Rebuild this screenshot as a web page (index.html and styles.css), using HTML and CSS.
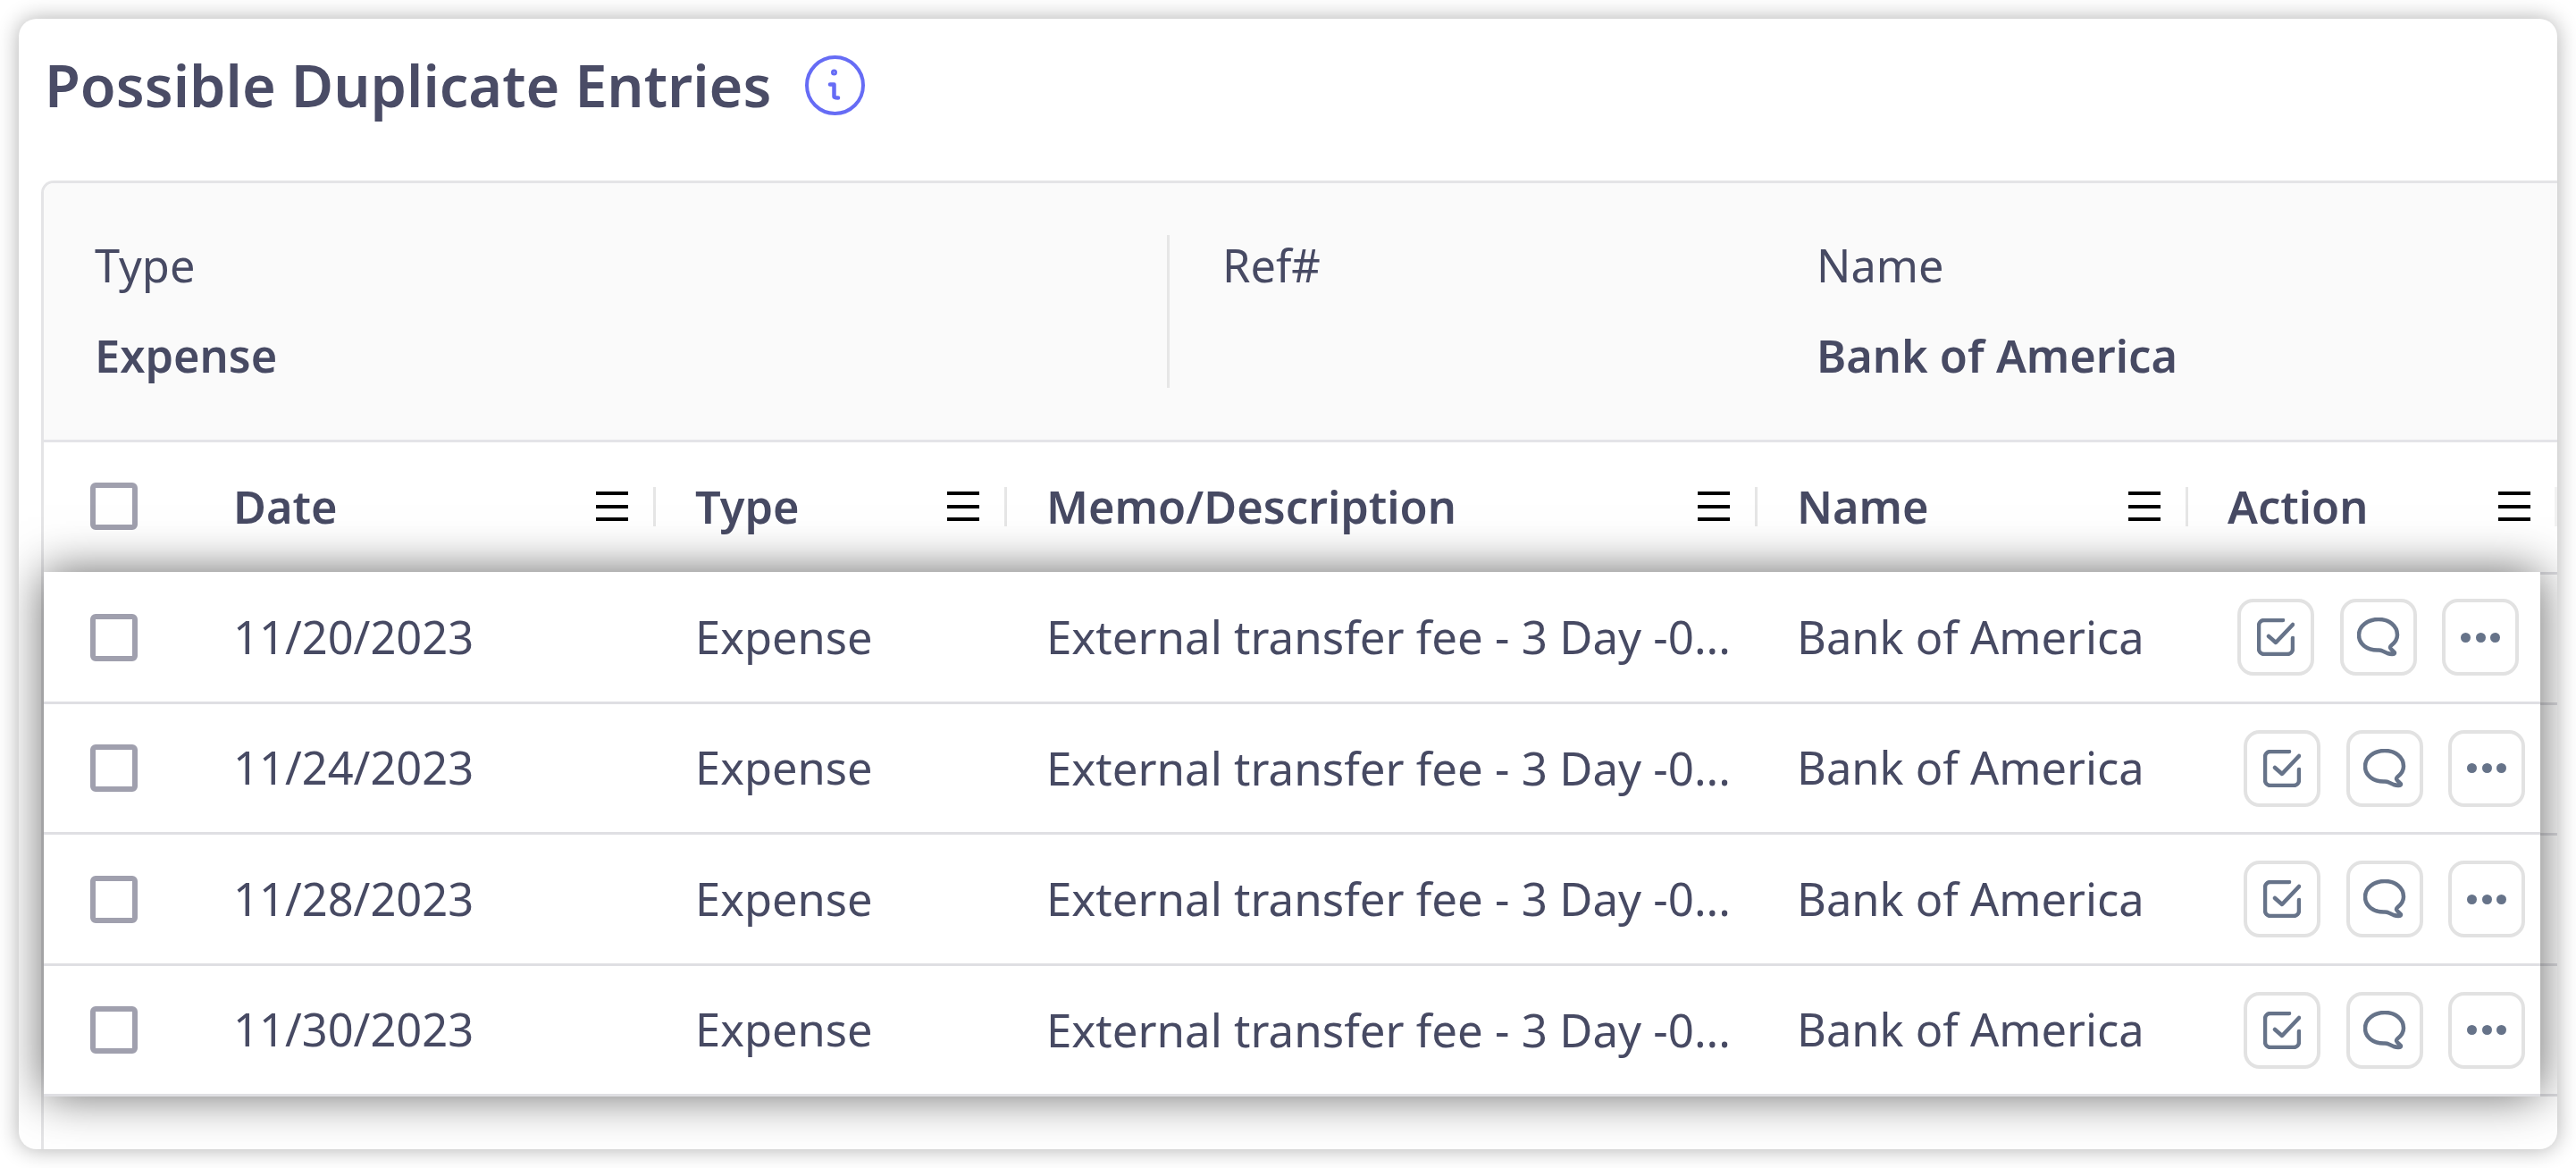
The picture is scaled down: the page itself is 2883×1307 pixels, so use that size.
FILE: index.html
```html
<!DOCTYPE html>
<html lang="en">
<head>
<meta charset="utf-8">
<title>Possible Duplicate Entries</title>
<link rel="stylesheet" href="styles.css">
</head>
<body>
<main class="card">
  <header class="title-row">
    <h1 class="title">Possible Duplicate Entries</h1>
    <svg class="info-icon" viewBox="0 0 67 67" fill="none" stroke="#666cf5" stroke-width="4" stroke-linecap="round" stroke-linejoin="round"><circle cx="33.5" cy="33.5" r="31.5"/><path stroke-width="4.500" d="M28 32.500h4.500v13.500q0 1.500 4.500 1.500"/><circle cx="32.500" cy="19" r="1.500"/></svg>
  </header>
  <section class="box">
    <div class="summary">
      <div class="sum-col sum-type"><div class="sum-label">Type</div><div class="sum-value">Expense</div></div>
      <div class="sum-col sum-ref"><div class="sum-label">Ref#</div></div>
      <div class="sum-col sum-name"><div class="sum-label">Name</div><div class="sum-value">Bank of America</div></div>
    </div>
    <div class="head grid">
      <div class="cell-check"><span class="check"></span></div>
      <div class="hcell"><span class="hlabel">Date</span><span class="menu"></span></div>
      <div class="hcell"><span class="hlabel">Type</span><span class="menu"></span></div>
      <div class="hcell"><span class="hlabel">Memo/Description</span><span class="menu"></span></div>
      <div class="hcell"><span class="hlabel">Name</span><span class="menu"></span></div>
      <div class="hcell hcell-last"><span class="hlabel">Action</span><span class="menu"></span></div>
    </div>
    <div class="bed">
      <div class="bed-row"></div>
      <div class="bed-row"></div>
      <div class="bed-row"></div>
      <div class="bed-row"></div>
      <div class="rows">
        <div class="row grid row-first">
          <div class="cell-check"><span class="check"></span></div>
          <div class="cell">11/20/2023</div><div class="cell">Expense</div><div class="cell cell-memo">External transfer fee - 3 Day -0...</div><div class="cell">Bank of America</div>
          <div class="actions">
            <button class="btn"><svg class="i-check" viewBox="0 0 42 42" fill="none" stroke="#667389" stroke-width="4" stroke-linecap="round" stroke-linejoin="round"><path d="M29 2H8a6 6 0 0 0-6 6v26a6 6 0 0 0 6 6h26a6 6 0 0 0 6-6V22"/><path d="M13 20l8 7L40 7"/></svg></button>
            <button class="btn"><svg class="i-chat" viewBox="0 0 48 44" fill="none" stroke="#667389" stroke-width="4" stroke-linecap="round" stroke-linejoin="round"><path d="M24 2C12 2 2 9.500 2 19.500S11 37 24 36.500c1.500 0 3 .2 4.500 1L34 40c3 1 8 1.500 8-.5 0-1.500-5-4-5-6 0-1 .5-1.500 1-2 4-3 7-7 7-12C45 9.500 36 2 24 2z"/></svg></button>
            <button class="btn"><span class="dot"></span><span class="dot"></span><span class="dot"></span></button>
          </div>
        </div>
        <div class="row grid">
          <div class="cell-check"><span class="check"></span></div>
          <div class="cell">11/24/2023</div><div class="cell">Expense</div><div class="cell cell-memo">External transfer fee - 3 Day -0...</div><div class="cell">Bank of America</div>
          <div class="actions">
            <button class="btn"><svg class="i-check" viewBox="0 0 42 42" fill="none" stroke="#667389" stroke-width="4" stroke-linecap="round" stroke-linejoin="round"><path d="M29 2H8a6 6 0 0 0-6 6v26a6 6 0 0 0 6 6h26a6 6 0 0 0 6-6V22"/><path d="M13 20l8 7L40 7"/></svg></button>
            <button class="btn"><svg class="i-chat" viewBox="0 0 48 44" fill="none" stroke="#667389" stroke-width="4" stroke-linecap="round" stroke-linejoin="round"><path d="M24 2C12 2 2 9.500 2 19.500S11 37 24 36.500c1.500 0 3 .2 4.500 1L34 40c3 1 8 1.500 8-.5 0-1.500-5-4-5-6 0-1 .5-1.500 1-2 4-3 7-7 7-12C45 9.500 36 2 24 2z"/></svg></button>
            <button class="btn"><span class="dot"></span><span class="dot"></span><span class="dot"></span></button>
          </div>
        </div>
        <div class="row grid">
          <div class="cell-check"><span class="check"></span></div>
          <div class="cell">11/28/2023</div><div class="cell">Expense</div><div class="cell cell-memo">External transfer fee - 3 Day -0...</div><div class="cell">Bank of America</div>
          <div class="actions">
            <button class="btn"><svg class="i-check" viewBox="0 0 42 42" fill="none" stroke="#667389" stroke-width="4" stroke-linecap="round" stroke-linejoin="round"><path d="M29 2H8a6 6 0 0 0-6 6v26a6 6 0 0 0 6 6h26a6 6 0 0 0 6-6V22"/><path d="M13 20l8 7L40 7"/></svg></button>
            <button class="btn"><svg class="i-chat" viewBox="0 0 48 44" fill="none" stroke="#667389" stroke-width="4" stroke-linecap="round" stroke-linejoin="round"><path d="M24 2C12 2 2 9.500 2 19.500S11 37 24 36.500c1.500 0 3 .2 4.500 1L34 40c3 1 8 1.500 8-.5 0-1.500-5-4-5-6 0-1 .5-1.500 1-2 4-3 7-7 7-12C45 9.500 36 2 24 2z"/></svg></button>
            <button class="btn"><span class="dot"></span><span class="dot"></span><span class="dot"></span></button>
          </div>
        </div>
        <div class="row grid">
          <div class="cell-check"><span class="check"></span></div>
          <div class="cell">11/30/2023</div><div class="cell">Expense</div><div class="cell cell-memo">External transfer fee - 3 Day -0...</div><div class="cell">Bank of America</div>
          <div class="actions">
            <button class="btn"><svg class="i-check" viewBox="0 0 42 42" fill="none" stroke="#667389" stroke-width="4" stroke-linecap="round" stroke-linejoin="round"><path d="M29 2H8a6 6 0 0 0-6 6v26a6 6 0 0 0 6 6h26a6 6 0 0 0 6-6V22"/><path d="M13 20l8 7L40 7"/></svg></button>
            <button class="btn"><svg class="i-chat" viewBox="0 0 48 44" fill="none" stroke="#667389" stroke-width="4" stroke-linecap="round" stroke-linejoin="round"><path d="M24 2C12 2 2 9.500 2 19.500S11 37 24 36.500c1.500 0 3 .2 4.500 1L34 40c3 1 8 1.500 8-.5 0-1.500-5-4-5-6 0-1 .5-1.500 1-2 4-3 7-7 7-12C45 9.500 36 2 24 2z"/></svg></button>
            <button class="btn"><span class="dot"></span><span class="dot"></span><span class="dot"></span></button>
          </div>
        </div>
      </div>
    </div>
  </section>
</main>
</body>
</html>
```
FILE: styles.css
```css
* { box-sizing: border-box; }
html, body { margin: 0; height: 100%; background: #fff; }
body {
  padding: 21px;
  font-family: "Noto Sans", "Open Sans", sans-serif;
  color: #474a63;
  overflow: hidden;
}
.card {
  height: 1265px;
  width: 2841px;
  background: #fff;
  border-radius: 20px;
  box-shadow: 0 0 24px rgba(0, 0, 0, .32);
  overflow: hidden;
  display: flex;
  flex-direction: column;
}
.title-row {
  height: 181px;
  flex: none;
  display: flex;
  align-items: flex-start;
  padding: 41px 0 0 29px;
  gap: 38px;
}
.title {
  margin: 0;
  font-size: 64.800px;
  line-height: 66px;
  font-weight: 600;
  color: #4a4c66;
  white-space: nowrap;
}
.info-icon { width: 67px; height: 67px; flex: none; }
.box {
  flex: 1;
  margin-left: 25px;
  border-left: 3px solid #e4e4e6;
  border-top: 3px solid #e4e4e6;
  border-top-left-radius: 14px;
  display: flex;
  flex-direction: column;
}
.summary {
  height: 290px;
  flex: none;
  background: #fafafa;
  border-bottom: 3px solid #e4e4e8;
  border-top-left-radius: 12px;
  display: flex;
  padding-top: 58px;
}
.sum-col { height: 171px; font-size: 50.500px; }
.sum-type { width: 1260px; padding-left: 57px; border-right: 3px solid #e6e6e6; }
.sum-ref { width: 724px; padding-left: 59px; }
.sum-label { line-height: 68px; }
.sum-value { line-height: 68px; margin-top: 33px; font-weight: 600; }
.grid {
  display: grid;
  grid-template-columns: 212px 517px 393px 840px 482px 1fr;
  align-items: center;
}
.head { height: 145px; flex: none; padding-bottom: 2px; }
.cell-check { padding-left: 52px; display: flex; }
.check {
  width: 53px;
  height: 53px;
  border: 6px solid #a0a0ae;
  border-radius: 6px;
  background: #fff;
}
.hcell {
  display: flex;
  align-items: center;
  margin-right: 44px;
  height: 44px;
  border-right: 3px solid #e6e6e6;
  padding-right: 28px;
}
.hcell-last { margin-right: 0; padding-right: 27px; border-right-color: #f2f2f2; }
.hlabel { flex: 1; font-size: 50.500px; font-weight: 600; padding-bottom: 1px; }
.menu {
  width: 36px;
  height: 33px;
  flex: none;
  border-top: 4px solid #000;
  border-bottom: 4px solid #000;
  background: linear-gradient(#000, #000) center / 100% 4px no-repeat;
}
.bed { flex: 1; position: relative; border-top: 3px solid #dfdfe3; }
.bed-row { height: 146px; border-bottom: 3px solid #dfdfe3; }
.rows {
  position: absolute;
  left: 0;
  top: -3px;
  width: 2794px;
  height: 586px;
  background: #fff;
  box-shadow: 0 0 50px rgba(0, 0, 0, .6);
  display: grid;
  grid-template-rows: repeat(4, 1fr);
}
.row { box-shadow: inset 0 -2px 0 #dfdfe3, 0 1px 0 #dfdfe3; }
.cell { font-size: 50.600px; white-space: nowrap; padding-bottom: 2px; }
.cell-memo { font-size: 51px; }
.actions { display: flex; justify-content: flex-end; gap: 28.500px; padding-right: 17px; }
.row-first .actions { padding-right: 24px; }
.btn {
  width: 86px;
  height: 86px;
  padding: 0;
  background: #fff;
  border: 4px solid #e2e2e2;
  border-radius: 18px;
  display: flex;
  align-items: center;
  justify-content: center;
  gap: 5.500px;
}
.i-check { width: 42px; height: 42px; stroke-width: 4.500px; }
.i-chat { width: 48px; height: 44px; stroke-width: 4.500px; }
.dot { width: 11px; height: 11px; border-radius: 50%; background: #667389; }
```
